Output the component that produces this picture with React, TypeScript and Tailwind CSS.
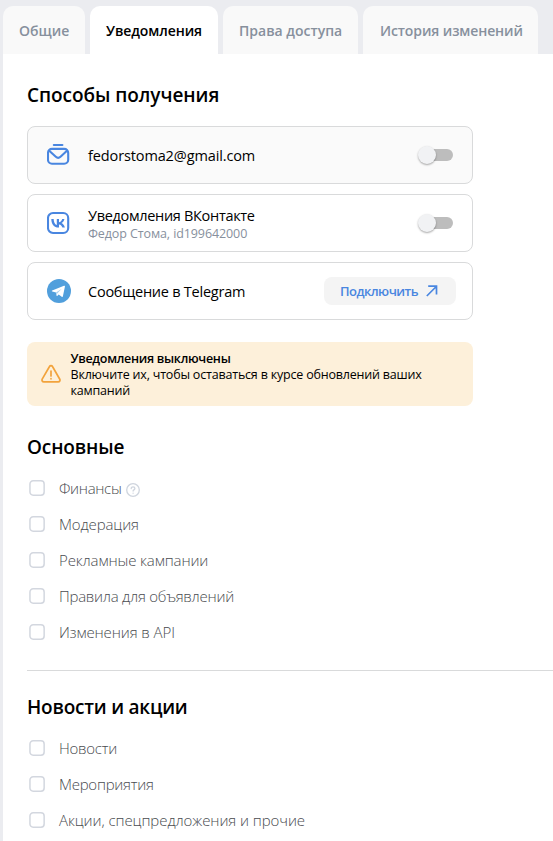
import type { ReactNode } from "react";

const tabs = [
  { label: "Общие", box: "w-[82px] pl-4", text: "tracking-[0px]", active: false },
  { label: "Уведомления", box: "w-[128px] pl-4", text: "tracking-[-0.080px]", active: true },
  { label: "Права доступа", box: "w-[135px] pl-4", text: "tracking-[0px]", active: false },
  { label: "История изменений", box: "w-[175px] pl-[17px]", text: "tracking-[-0.110px]", active: false },
];

function Toggle() {
  return (
    <span className="mr-[19px] flex h-3 w-[34px] shrink-0 items-center rounded-full bg-[#bdbdbd]">
      <span className="-ml-px size-[18px] rounded-full bg-[#f1f2f4] shadow-[0_1px_2px_rgba(0,0,0,0.35)]" />
    </span>
  );
}

function MailIcon() {
  return (
    <svg width="24" height="24" viewBox="0 0 24 24" fill="none" stroke="#4986e0" strokeWidth="2.100" strokeLinecap="round" strokeLinejoin="round">
      <path d="M6.800 2h8.600" />
      <rect x="1" y="5.900" width="20.200" height="14.800" rx="4" />
      <path d="M2.500 8l6.300 5.800a3.500 3.500 0 0 0 4.700 0L19.700 8" />
    </svg>
  );
}

function VkIcon() {
  return (
    <svg width="24" height="24" viewBox="0 0 24 24" fill="none">
      <rect x="1" y="2" width="20.200" height="20" rx="5" stroke="#4986e0" strokeWidth="2.100" />
      <path fill="#4986e0" d="M11.700 16.500c-4.800 0-7.300-3.200-7.400-8.600h2.400c.1 4 1.700 5.600 3.100 6V7.900h2.200v3.400c1.400-.2 2.700-1.700 3.200-3.400h2.200c-.4 2.100-1.800 3.500-2.900 4.200 1.100.5 2.700 1.800 3.400 4.400h-2.500c-.5-1.500-1.700-2.800-3.400-3v3z" />
    </svg>
  );
}

function TelegramIcon() {
  return (
    <svg width="24" height="24" viewBox="0 0 24 24">
      <circle cx="12" cy="12" r="12" fill="#519fdc" />
      <path fill="#fff" d="M5.200 11.600l11.800-4.800c.6-.2 1.100.1.900.9l-2 9.500c-.1.700-.6.900-1.200.5l-3-2.300-1.500 1.500c-.3.300-.7.100-.7-.3l-.5-3L5.300 12.500c-.7-.2-.7-.6-.1-.9z" />
      <path fill="#a9cfed" d="M9 13.600l5.800-3.900-4.600 4.700-.4 2.200z" />
    </svg>
  );
}

function Method({ icon, tint, children, action }: { icon: ReactNode; tint?: boolean; children: ReactNode; action: ReactNode }) {
  return (
    <div className={`flex h-[58px] w-[446px] items-center rounded-lg border border-[#d9dadb] ${tint ? "bg-[#fafafa]" : "bg-white"}`}>
      <div className="ml-[19px] w-[41px] shrink-0">{icon}</div>
      <div className="min-w-0 flex-1 whitespace-nowrap pt-[2px] text-[14.500px] leading-5">{children}</div>
      {action}
    </div>
  );
}

function Check({ label, tracking, hint }: { label: string; tracking: string; hint?: boolean }) {
  return (
    <label className="flex h-9 items-center">
      <svg className="ml-[2px] shrink-0" width="16" height="16" viewBox="0 0 16 16" fill="#fff" stroke="#d3d7df" strokeWidth="1.500">
        <rect x="0.950" y="0.850" width="14.200" height="14.300" rx="3.200" />
      </svg>
      <span className={`ml-[14px] w-max whitespace-nowrap text-[15px] font-light text-[#494b4f] ${tracking}`}>{label}</span>
      {hint && (
        <svg className="ml-[5px] mt-1" width="14" height="14" viewBox="0 0 14 14" fill="none" stroke="#cfd5de" strokeWidth="1.300" strokeLinecap="round">
          <circle cx="7" cy="7" r="6.300" />
          <path d="M5.200 5.600c0-2.400 3.700-2.300 3.700 0 0 1.300-1.800 1.300-1.800 2.500M7.100 10.100v.1" />
        </svg>
      )}
    </label>
  );
}

export default function App() {
  return (
    <div className="h-[841px] w-[553px] overflow-hidden bg-[#ebecf0] pl-[3px] pt-1.5 font-['Open_Sans','Noto_Sans',sans-serif] text-black">
      <nav className="flex h-12 gap-[5px]">
        {tabs.map((t) => (
          <div
            key={t.label}
            className={`flex items-center whitespace-nowrap rounded-t-[10px] text-[14px] font-semibold ${t.box} ${t.text} ${t.active ? "bg-white text-black" : "bg-[#f9f9f9] text-[#87909d]"}`}
          >
            {t.label}
          </div>
        ))}
      </nav>
      <main className="h-[787px] bg-white pl-6">
        <h2 className="pt-[27px] text-[19px] font-semibold leading-7 tracking-[-0.050px]">Способы получения</h2>
        <div className="mt-[17px] flex flex-col gap-2.5">
          <Method tint icon={<MailIcon />} action={<Toggle />}>
            <span className="tracking-[-0.120px]">fedorstoma2@gmail.com</span>
          </Method>
          <Method icon={<VkIcon />} action={<Toggle />}>
            <div className="tracking-[-0.310px]">Уведомления ВКонтакте</div>
            <div className="text-[12.500px] leading-4 tracking-[-0.1px] text-[#87909d]">Федор Стома, id199642000</div>
          </Method>
          <Method
            icon={<TelegramIcon />}
            action={
              <button className="mr-4 flex h-7 w-[132px] shrink-0 items-center rounded-lg bg-[#f4f4f4] pl-4 pt-px text-[13px] font-semibold tracking-[-0.550px] text-[#4986e0]">
                Подключить
                <svg className="-mt-px ml-auto mr-[18px]" width="12" height="12" viewBox="0 0 12 12" fill="none" stroke="currentColor" strokeWidth="1.700">
                  <path d="M0.800 11L10.300 1.500M2.200 1.200H10.500V9.500" />
                </svg>
              </button>
            }
          >
            <span className="tracking-[-0.240px]">Сообщение в Telegram</span>
          </Method>
        </div>
        <div className="mt-[22px] flex h-16 w-[446px] items-center rounded-lg bg-[#fdf0da]">
          <svg className="ml-[13px] shrink-0" width="22" height="20" viewBox="0 0 22 20" fill="none" stroke="#f2a33c" strokeWidth="1.700" strokeLinecap="round" strokeLinejoin="round">
            <path d="M9.500 2.500L2.200 15.200a1.800 1.800 0 0 0 1.600 2.700h14.400a1.800 1.800 0 0 0 1.600-2.700L12.500 2.500a1.700 1.700 0 0 0-3 0zM11 7v5M11 14.700v.1" />
          </svg>
          <div className="ml-[8.500px] pt-[2px] whitespace-nowrap text-[12.500px] leading-4">
            <div className="font-semibold tracking-[-0.290px]">Уведомления выключены</div>
            <div className="tracking-[-0.190px]">Включите их, чтобы оставаться в курсе обновлений ваших</div>
            <div className="tracking-[-0.190px]">кампаний</div>
          </div>
        </div>
        <h2 className="mt-[27px] text-[19px] font-semibold leading-7 tracking-[-0.120px]">Основные</h2>
        <div className="mt-[9px]">
          <Check label="Финансы" tracking="tracking-[-0.320px]" hint />
          <Check label="Модерация" tracking="tracking-[-0.120px]" />
          <Check label="Рекламные кампании" tracking="tracking-[-0.120px]" />
          <Check label="Правила для объявлений" tracking="tracking-[-0.250px]" />
          <Check label="Изменения в API" tracking="tracking-[-0.1px]" />
        </div>
        <hr className="mt-5 border-t border-[#d9dadb]" />
        <h2 className="mt-[22px] text-[19px] font-semibold leading-7 tracking-[-0.220px]">Новости и акции</h2>
        <div className="mt-[9px]">
          <Check label="Новости" tracking="tracking-[-0.250px]" />
          <Check label="Мероприятия" tracking="tracking-[-0.250px]" />
          <Check label="Акции, спецпредложения и прочие" tracking="tracking-[-0.080px]" />
        </div>
      </main>
    </div>
  );
}
